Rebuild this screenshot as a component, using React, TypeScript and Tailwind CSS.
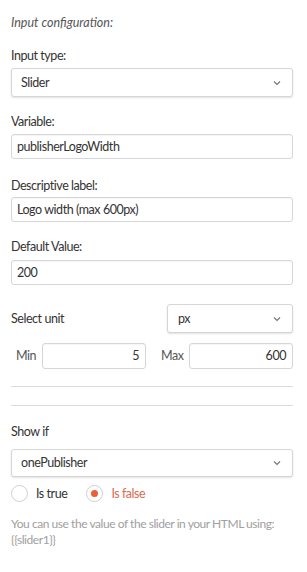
import React from "react";

const Chevron = () => (
  <svg width="8" height="6" viewBox="0 0 8 6" className="shrink-0">
    <path d="M1 1.5 L4 4.5 L7 1.5" fill="none" stroke="#777" strokeWidth="1.2" />
  </svg>
);

const Select = ({ value, className = "" }: { value: string; className?: string }) => (
  <div
    className={`flex items-center justify-between rounded-[3px] border border-[#d6d6d6] bg-white pl-[9px] pr-[11px] shadow-[0_1px_2px_rgba(0,0,0,0.12)] ${className}`}
  >
    <span>{value}</span>
    <Chevron />
  </div>
);

const Input = ({ value, className = "", right = false }: { value: string; className?: string; right?: boolean }) => (
  <div
    className={`flex items-center rounded-[3px] border border-[#d6d6d6] bg-white px-[5px] shadow-[inset_0_1px_1px_rgba(0,0,0,0.04)] ${right ? "justify-end" : ""} ${className}`}
  >
    <span>{value}</span>
  </div>
);

export default function App() {
  return (
    <div
      className="w-[307px] h-[572px] bg-white text-[12.5px] leading-[16px] tracking-[-0.45px] text-[#333]"
      style={{ fontFamily: "Lato, 'Open Sans', sans-serif" }}
    >
      <div className="pl-[11px] pr-[14px] pt-[15px]">
        <div className="italic tracking-normal text-[#555]">Input configuration:</div>

        <div className="mt-[17px]">Input type:</div>
        <Select value="Slider" className="mt-[4px] h-[29px]" />

        <div className="mt-[17px]">Variable:</div>
        <Input value="publisherLogoWidth" className="mt-[4px] h-[25px]" />

        <div className="mt-[19px]">Descriptive label:</div>
        <Input value="Logo width (max 600px)" className="mt-[3px] h-[25px]" />

        <div className="mt-[17px]">Default Value:</div>
        <Input value="200" className="mt-[5px] h-[25px]" />

        <div className="mt-[19px] flex items-center justify-between">
          <span>Select unit</span>
          <Select value="px" className="h-[29px] w-[126px] pl-[10px]" />
        </div>

        <div className="mt-[10px] flex items-center">
          <span className="ml-[5px] w-[26px] text-[#555]">Min</span>
          <Input value="5" right className="h-[26px] w-[104px] pr-[6px]" />
          <span className="ml-[15px] w-[28px] text-[#555]">Max</span>
          <Input value="600" right className="h-[26px] flex-1 pr-[6px]" />
        </div>

        <div className="mt-[17px] h-px bg-[#dcdcdc]" />
        <div className="mt-[18px] h-px bg-[#dcdcdc]" />

        <div className="mt-[18px]">Show if</div>
        <Select value="onePublisher" className="mt-[9px] h-[28px]" />

        <div className="mt-[8px] flex items-center">
          <div className="h-[17px] w-[17px] rounded-full border border-[#cfcfcf] bg-white" />
          <span className="ml-[8px]">Is true</span>
          <div className="ml-[19px] flex h-[17px] w-[17px] items-center justify-center rounded-full border border-[#cfcfcf] bg-white">
            <div className="h-[7px] w-[7px] rounded-full bg-[#e8603c]" />
          </div>
          <span className="ml-[8px] text-[#d96a52]">Is false</span>
        </div>

        <div className="mt-[14px] whitespace-nowrap text-[12px] text-[#a0a0a0]">
          You can use the value of the slider in your HTML using:
          <br />
          {"{{slider1}}"}
        </div>
      </div>
    </div>
  );
}
